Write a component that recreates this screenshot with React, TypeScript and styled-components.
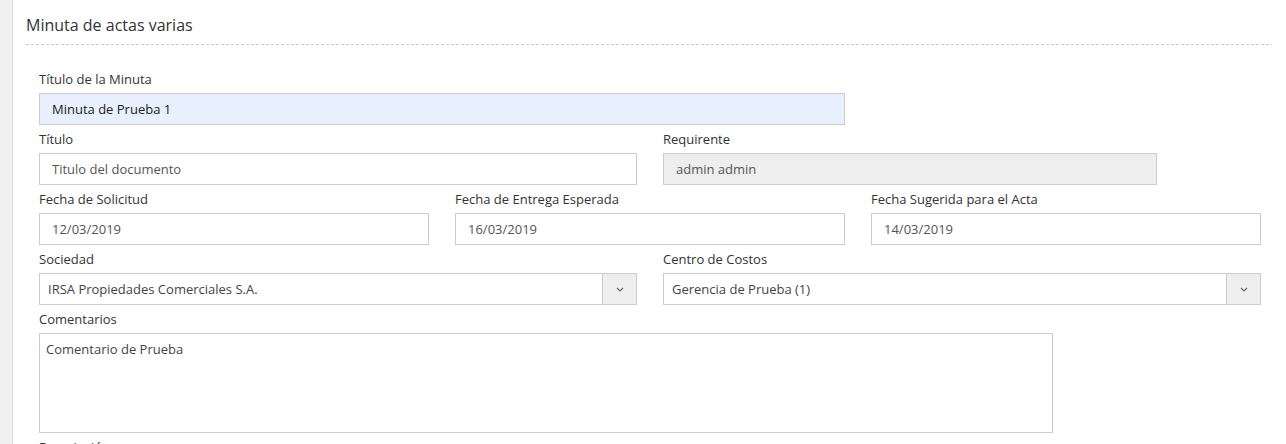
import React from 'react';
import styled, { createGlobalStyle } from 'styled-components';

const GlobalStyle = createGlobalStyle`
  html, body {
    margin: 0;
    padding: 0;
    background: #ffffff;
    font-family: "Open Sans", "Noto Sans", sans-serif;
    color: #333333;
  }
  * { box-sizing: border-box; }
`;

const Page = styled.div`
  display: flex;
  min-height: 444px;
  overflow: hidden;
`;

const SideStrip = styled.div`
  width: 13px;
  flex-shrink: 0;
  background: #f0f0f0;
  border-right: 1px solid #dcdcdc;
`;

const Panel = styled.div`
  flex: 1;
  padding: 0 14px 0 13px;
`;

const PanelTitle = styled.h3`
  margin: 0;
  height: 44px;
  padding-top: 13px;
  font-size: 16px;
  font-weight: 400;
  line-height: 24px;
  color: #333333;
`;

const Dashed = styled.div`
  height: 1px;
  background: repeating-linear-gradient(to right, #cccccc 0 3px, transparent 3px 5px);
`;

const Form = styled.form`
  display: grid;
  grid-template-columns: repeat(12, 78px);
  column-gap: 26px;
  padding: 20px 11px 0 13px;
`;

const Field = styled.div<{ $span: number; $start?: number }>`
  grid-column: ${p => (p.$start ? `${p.$start} / span ${p.$span}` : `span ${p.$span}`)};
  display: flex;
  flex-direction: column;
`;

const Label = styled.label`
  height: 28px;
  line-height: 28px;
  font-size: 13px;
  color: #333333;
  white-space: nowrap;
`;

const Input = styled.input<{ $tone?: 'autofill' | 'readonly' }>`
  height: 32px;
  width: 100%;
  border: 1px solid #cccccc;
  border-radius: 0;
  padding: 0 12px;
  font-family: inherit;
  font-size: 13px;
  outline: none;
  color: ${p => (p.$tone === 'autofill' ? '#222222' : '#555555')};
  background: ${p =>
    p.$tone === 'autofill' ? '#e8f0fe' : p.$tone === 'readonly' ? '#eeeeee' : '#ffffff'};
`;

const SelectBox = styled.div`
  height: 32px;
  display: flex;
  border: 1px solid #cccccc;
  background: #ffffff;
`;

const SelectValue = styled.div`
  flex: 1;
  padding: 0 8px;
  line-height: 30px;
  font-size: 13px;
  color: #444444;
  white-space: nowrap;
`;

const SelectArrow = styled.div`
  width: 34px;
  display: flex;
  align-items: center;
  justify-content: center;
  background: #eeeeee;
  border-left: 1px solid #cccccc;
`;

const TextArea = styled.textarea`
  height: 100px;
  width: 100%;
  resize: none;
  border: 1px solid #cccccc;
  border-radius: 0;
  padding: 6px 6px;
  font-family: inherit;
  font-size: 13px;
  line-height: 19px;
  color: #444444;
  outline: none;
`;

const Chevron = () => (
  <svg width="8" height="5" viewBox="0 0 8 5" fill="none">
    <path d="M1 1l3 3 3-3" stroke="#5a6a80" strokeWidth="1.1" />
  </svg>
);

const Select = ({ value }: { value: string }) => (
  <SelectBox>
    <SelectValue>{value}</SelectValue>
    <SelectArrow>
      <Chevron />
    </SelectArrow>
  </SelectBox>
);

export default function App() {
  return (
    <>
      <GlobalStyle />
      <Page>
        <SideStrip />
        <Panel>
          <PanelTitle>Minuta de actas varias</PanelTitle>
          <Dashed />
          <Form onSubmit={e => e.preventDefault()}>
            <Field $span={8} $start={1}>
              <Label>Título de la Minuta</Label>
              <Input $tone="autofill" defaultValue="Minuta de Prueba 1" />
            </Field>

            <Field $span={6} $start={1}>
              <Label>Título</Label>
              <Input defaultValue="Titulo del documento" />
            </Field>
            <Field $span={5}>
              <Label>Requirente</Label>
              <Input $tone="readonly" readOnly defaultValue="admin admin" />
            </Field>

            <Field $span={4} $start={1}>
              <Label>Fecha de Solicitud</Label>
              <Input defaultValue="12/03/2019" />
            </Field>
            <Field $span={4}>
              <Label>Fecha de Entrega Esperada</Label>
              <Input defaultValue="16/03/2019" />
            </Field>
            <Field $span={4}>
              <Label>Fecha Sugerida para el Acta</Label>
              <Input defaultValue="14/03/2019" />
            </Field>

            <Field $span={6} $start={1}>
              <Label>Sociedad</Label>
              <Select value="IRSA Propiedades Comerciales S.A." />
            </Field>
            <Field $span={6}>
              <Label>Centro de Costos</Label>
              <Select value="Gerencia de Prueba (1)" />
            </Field>

            <Field $span={10} $start={1}>
              <Label>Comentarios</Label>
              <TextArea defaultValue="Comentario de Prueba" />
            </Field>

            <Field $span={10} $start={1}>
              <Label>Descripción</Label>
            </Field>
          </Form>
        </Panel>
      </Page>
    </>
  );
}
